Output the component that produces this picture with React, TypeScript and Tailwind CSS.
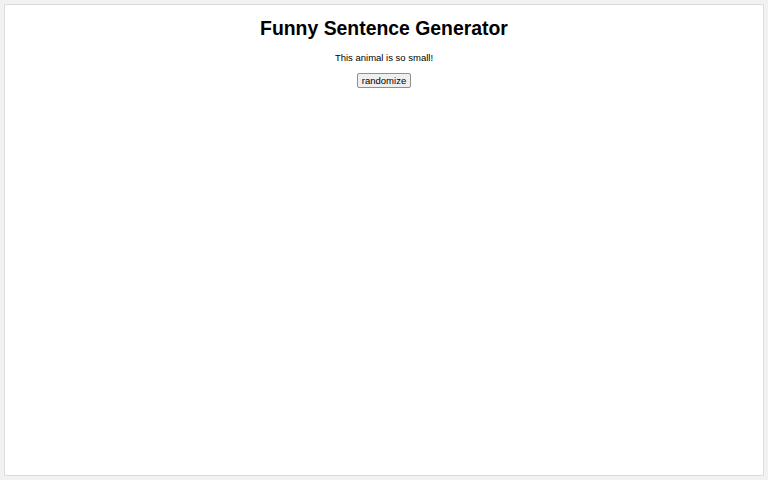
import React, { useState } from "react";

const sentences = ["This animal is so small!"];

export default function App() {
  const [s, setS] = useState(sentences[0]);
  return (
    <div className="h-[480px] w-[768px] bg-[#f2f2f2] p-[4px]" style={{ fontFamily: '"Liberation Sans", Arial, sans-serif' }}>
      <div className="flex h-full flex-col items-center border border-[#dcdcdc] bg-white text-black">
        <h1 className="mt-[12px] text-[19.4px] font-bold leading-[23px]">Funny Sentence Generator</h1>
        <p className="mt-[12px] text-[9.5px] leading-[11px]">{s}</p>
        <button
          className="mt-[10px] rounded-[2px] border border-[#8f8f8f] bg-[#efefef] px-[3.5px] text-[9.5px] leading-[13px]"
          onClick={() => setS(sentences[Math.floor(Math.random() * sentences.length)])}
        >
          randomize
        </button>
      </div>
    </div>
  );
}
